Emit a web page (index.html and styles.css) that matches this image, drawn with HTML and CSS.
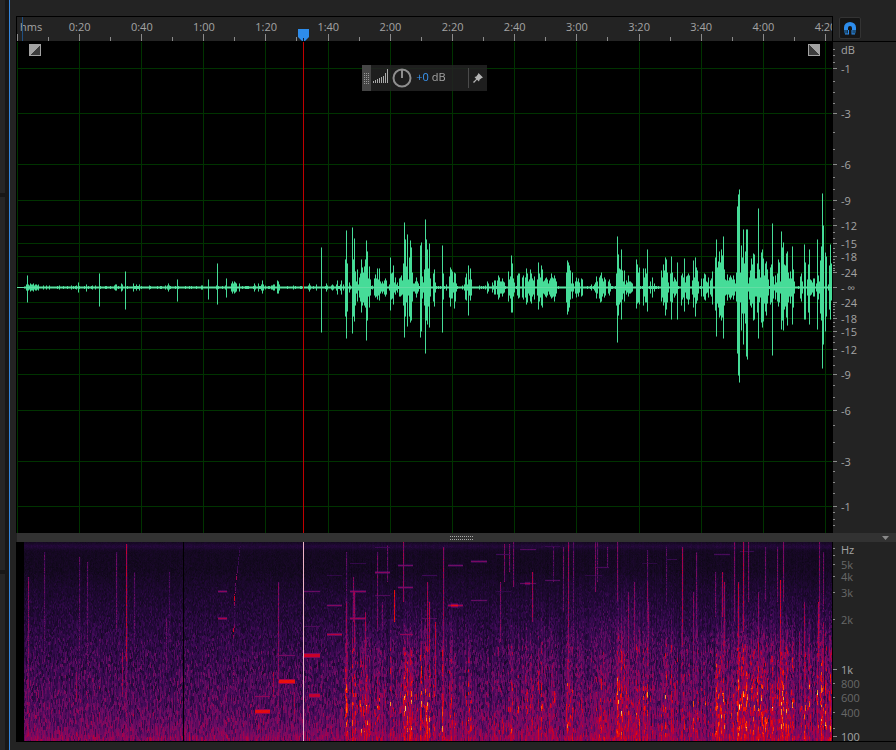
FILE: index.html
```html
<!DOCTYPE html>
<html lang="en">
<head>
<meta charset="utf-8">
<title>Audio editor</title>
<link rel="stylesheet" href="styles.css">
</head>
<body>
<aside class="dock" aria-hidden="true">
  <div class="dock-panel dock-a"></div>
  <div class="dock-panel dock-b"></div>
  <div class="dock-panel dock-c"></div>
</aside>
<main class="editor">
  <section class="timeline">
    <div class="ruler">
      <svg class="ruler-ticks" id="rulerTicks" aria-hidden="true"></svg>
      <div class="ruler-labels">
        <span class="unit">hms</span>
        <span>0:20</span><span>0:40</span><span>1:00</span><span>1:20</span><span>1:40</span><span>2:00</span><span>2:20</span><span>2:40</span><span>3:00</span><span>3:20</span><span>3:40</span><span>4:00</span><span>4:20</span>
      </div>
      <svg class="marker" viewBox="0 0 11 12" aria-hidden="true"><path d="M0 0H11V8L7 12H4L0 8Z" fill="#2d8ceb"/><path d="M5 9h1v3H5z" fill="#111d30"/></svg>
    </div>
    <div class="ruler-tools">
      <button class="snap" aria-label="Toggle snapping">
        <svg viewBox="0 0 12 13" width="12" height="13"><path d="M0 8V5.500A6 5.500 0 0 1 12 5.500V8H8V6Q8 4 6 4T4 6V8Z" fill="#2d8ceb"/><path d="M0 8h3.500v4H1L0 10zM8.500 8H12v2l-1 2H8.500z" fill="#1b507f"/><path d="M1 11.500h4v1H1zM7.500 11.500h3.500v1H7.500zM4 8h1v4H4zM7.500 8h1v4h-1z" fill="#2d8ceb"/></svg>
      </button>
    </div>
  </section>

  <section class="wave-row">
    <div class="wave">
      <canvas id="wave"></canvas>
      <div class="playhead"></div>
      <button class="fade fade-in" aria-label="Fade in"><svg viewBox="0 0 12 12" width="12" height="12" shape-rendering="crispEdges"><path d="M0 0h12v12H0z" fill="#a3a3a3"/><path d="M11 1v10H1z" fill="#3c3c3c"/></svg></button>
      <button class="fade fade-out" aria-label="Fade out"><svg viewBox="0 0 12 12" width="12" height="12" shape-rendering="crispEdges"><path d="M0 0h12v12H0z" fill="#a3a3a3"/><path d="M1 1v10h10z" fill="#3c3c3c"/></svg></button>
      <div class="hud">
        <span class="hud-grip"><svg width="5" height="11" viewBox="0 0 5 11"><path d="M.5 0v11M2.500 0v11M4.500 0v11" stroke="#999" stroke-dasharray="1 1"/></svg></span>
        <svg class="bars" viewBox="0 0 15 14" width="15" height="14" shape-rendering="crispEdges"><path d="M0 12h1v2H0zM2 11h1v3H2zM4 10h1v4H4zM6 9h1v5H6zM8 8h1v6H8zM10 7h1v7h-1zM12 4h1v10h-1zM14 0h1v14h-1z" fill="#aaa"/></svg>
        <button class="knob" aria-label="Gain"><svg viewBox="0 0 20 20" width="20" height="20"><circle cx="10" cy="10" r="8.500" fill="none" stroke="#8f8f8f" stroke-width="2"/><path d="M10 2v8" stroke="#8f8f8f" stroke-width="2"/></svg></button>
        <button class="gain"><b>+0</b> dB</button>
        <span class="hud-sep"></span>
        <button class="pin" aria-label="Pin"><svg viewBox="0 0 10 10" width="10" height="10"><path d="M5.500 0 10 4.500 8.800 5 6.500 6.700 6 8.500 4 6.800 1 10 0 9 3.200 6 1.500 4 3.300 3.500 5 1.200z" fill="#b5b5b5"/></svg></button>
      </div>
    </div>
    <svg class="scale" id="dbScale" role="img" aria-label="Amplitude scale"></svg>
  </section>

  <div class="splitter">
    <svg class="grip" width="24" height="4" viewBox="0 0 24 4"><path d="M0 .5h24M0 3.500h24" stroke="#aaa" stroke-dasharray="1 1"/></svg>
    <button class="collapse" aria-label="Collapse"><svg width="7" height="4" viewBox="0 0 7 4"><path d="M0 0h7L3.500 4z" fill="#8a8a8a"/></svg></button>
  </div>

  <section class="spectrum-row">
    <div class="spectrum">
      <canvas id="spectrum"></canvas>
      <div class="playhead"></div>
    </div>
    <svg class="scale" id="hzScale" role="img" aria-label="Frequency scale"></svg>
  </section>
</main>
<script src="main.js"></script>
</body>
</html>
```
FILE: styles.css
```css
* { box-sizing: border-box; }

:root {
  --panel: #232323;
  --line: #000;
  --text: #a3a3a3;
  --accent: #2d8ceb;
  --scale-width: 63px;
}

body {
  margin: 0;
  height: 100vh;
  display: flex;
  overflow: hidden;
  background: var(--panel);
  color: var(--text);
  font: 11px/16px "Open Sans", "Noto Sans", sans-serif;
}

button {
  padding: 0;
  border: 0;
  background: none;
  color: inherit;
  font: inherit;
  display: flex;
  align-items: center;
  justify-content: center;
}

.dock {
  flex: none;
  width: 9px;
  padding-right: 4px;
  background: #181818;
  display: flex;
  flex-direction: column;
  gap: 4px;
}
.dock-panel { background: #262626; }
.dock-a { flex: 193; }
.dock-b { flex: 373; }
.dock-c { flex: 176; }

.editor {
  flex: 1;
  min-width: 0;
  display: flex;
  flex-direction: column;
  border-left: 1px solid #3486dd;
  padding: 16px 0 8px 6px;
}

.timeline, .wave-row, .spectrum-row {
  display: grid;
  grid-template-columns: minmax(0, 1fr) var(--scale-width);
  border-left: 1px solid var(--line);
}

.timeline {
  height: 26px;
  border-bottom: 1px solid var(--line);
}
.ruler {
  position: relative;
  border-top: 1px solid var(--line);
  border-right: 1px solid var(--line);
}
.ruler-ticks { position: absolute; width: 100%; height: 100%; }
.ruler-labels {
  display: flex;
  padding-top: 2px;
  height: 24px;
  overflow: hidden;
}
.ruler-labels span {
  flex: none;
  width: calc(100% / 13.11);
  padding-left: 1px;
  text-align: center;
}
.ruler-labels .unit {
  width: calc(50% / 13.11);
  padding-left: 3px;
  text-align: left;
}
.marker {
  position: absolute;
  left: calc(35.1% - 5px);
  bottom: 0;
  width: 11px;
  height: 12px;
}
.ruler-tools { padding-left: 6px; }
.snap {
  width: 22px;
  height: 22px;
  margin-top: 1px;
  border: 1px solid #333;
  border-radius: 2px;
  background: #151515;
}

.wave-row { flex: 491; min-height: 0; }
.spectrum-row {
  flex: 199;
  min-height: 0;
  border-bottom: 1px solid var(--line);
}
.wave, .spectrum {
  position: relative;
  min-height: 0;
  min-width: 0;
  overflow: hidden;
  background: #000;
}
canvas {
  display: block;
  position: absolute;
  width: 100%;
  height: 100%;
}
.playhead {
  position: absolute;
  left: 35.1%;
  top: 0;
  bottom: 0;
  width: 1px;
  background: #c00000;
}
.spectrum .playhead { background: #eeb4c6; }

.fade { position: absolute; top: 2px; }
.fade-in { left: 12px; }
.fade-out { right: 13px; }

.hud {
  position: absolute;
  left: 42.3%;
  top: 23px;
  width: 125px;
  height: 26px;
  display: flex;
  align-items: center;
  background: rgba(35, 35, 35, .85);
}
.hud-grip {
  width: 9px;
  height: 100%;
  display: flex;
  align-items: center;
  justify-content: center;
  background: #454545;
}
.bars { margin: 0 4px 4px 2px; }
.gain { margin: 0 0 2px 4px; gap: 3px; }
.gain b { color: #3a97f5; font-weight: 500; }
.hud-sep {
  width: 1px;
  height: 20px;
  margin-left: auto;
  background: #4a4a4a;
}
.pin { width: 18px; height: 100%; }

.scale { width: 100%; height: 100%; }
.scale text { fill: var(--text); }
.scale .dim { fill: #686868; }
.scale .tick, .ruler-ticks .tick { fill: #8a8a8a; }
.ruler-ticks .range { fill: #1f4f82; }

.splitter {
  flex: none;
  position: relative;
  height: 9px;
  background: #323232;
  display: flex;
  align-items: center;
  justify-content: center;
  margin-left: 1px;
  padding-left: 10px;
}
.collapse { position: absolute; right: 7px; top: 3px; }
```
FILE: main.js
```js
const UNITS = 816;
const STEP = 62.2;

// Peaks as "column:above:below"; one value means a symmetric peak.
const PEAKS = parsePeaks(`
26:3 27:12:15 28:3 29:2 30:4 31:3 32:3 33:4 34:2 35:3 36:3 37:2 38:3 43:2 46:2 49:2 59:2 71:2 76:2 78:5:5 86:3:4 92:2 95:2 99:14:19 114:2 115:3 116:3 121:4 122:3 125:16:22
133:4 136:3 139:3 149:2 165:2 167:2 168:4 169:2 177:8:14 201:2 202:2 208:8:12 216:2 217:24:17 225:2 226:9:10 231:4 232:6 233:4 234:6 235:5 236:4 239:4 254:4
255:2 258:4 261:3 262:7:6 263:3 265:2 271:2 272:2 273:3 274:3 277:7:6 278:6 279:3 293:2 308:2 309:4 310:2 316:3 321:40:45 326:4 327:2 331:2 332:3 333:2 336:3 337:7 340:3 341:7 343:3
345:28:29 346:57:51 347:24:24 349:5 350:2 352:60:46 353:28:29 354:49:34 355:16:18 356:6 357:18:14 358:3 359:10 360:14 361:28:25 362:20:18 363:15 364:21:18 365:28:20 366:47:53 367:36:33 368:9 369:21:20 370:8
372:2 374:9:8 375:13:10 376:9 377:19:12 378:8 379:19:13 380:6 381:4 382:6 383:4 384:7 385:9 386:7 389:3 390:30:23 391:14:12 392:15:11 393:22:17 394:5 395:10:7 396:3 397:5 399:9 400:10:9 401:12:8 402:7
403:24:18 404:65:50 405:48:29 406:21:15 407:53:39 408:8 409:30:29 410:47:35 411:40:33 412:15:14 413:4 414:4 415:6 416:10 417:6 418:4 420:42:50 421:45:44 422:11 423:5 424:18 425:68:66 426:48:33 427:38:37 428:19 429:44:40 430:9
433:14 434:18:19 435:5 442:42:45 443:14:12 446:3 449:11:10 450:20:19 451:18:11 452:16:11 453:5 454:15:21 455:14 456:4 462:2 464:3 465:10:12 466:14:13 467:3 468:22:28 469:8 470:19:13 471:8
479:2 485:2 487:6 488:4 492:5 493:2 494:7 495:7 497:7 498:12 499:10 500:6 501:6 502:9 503:6 504:5 508:16:14 509:8 510:11 511:32:25 512:24:25 513:9 514:5 517:12:8 518:14:11 519:14:10 522:10 523:12
525:10 526:19:17 527:14:15 528:6 529:8 530:18:14 531:14:16 532:9 533:7 534:11:12 537:8 538:25:22 539:14 540:10 541:22:18 542:18:20 543:6 544:7 545:9 546:10 547:8 548:4 549:7 550:9 551:14:11 552:10 553:9 554:12:14 555:9 556:6
566:15 567:27 568:25:24 569:22:20 570:17:12 571:4 572:15:11 573:4 575:6 576:10 577:6 578:9 579:5 581:9 582:8 591:3 594:3 595:5 596:11 597:6 599:10:11 600:12:15 601:15:14 602:9 603:6 604:10 605:8 608:6 609:8 610:4
616:14:18 617:51:55 618:33:28 619:19:17 620:18:15 621:38:32 622:17:12 623:6 624:17:14 625:3 626:7 627:5 628:12:9 629:6 630:6 631:5 632:4 636:28:21 637:23:16 638:15 639:20:17 643:19:18 644:10:9 645:19:15 646:14:15 647:38:24 650:6 652:10 654:4
661:17:14 662:10 663:23:18 664:17:15 665:30:28 666:28:22 667:15 668:5 670:14 671:31:32 672:15 673:6 674:10 675:8 676:6 677:25:32 681:12:18 682:14:12 683:10 684:29:24 685:5 686:11 687:12 688:14:17 689:12 692:7 693:27:20 694:10 695:30:29 696:20:16 697:17:13 698:6
701:9 703:9 704:14:12 705:13 706:6 707:5 708:10 710:7 711:9 712:16:17 715:30:23 716:48:49 717:20:16 718:26:20 719:36:30 720:25:28 721:38:33 722:32:30 723:51 724:18 725:8 726:7 727:13 728:7 729:10 730:12 731:10 732:8 733:12 734:8 735:4
736:15:14 737:81:66 738:93:88 739:98:95 740:15 741:42:43 742:30:26 743:58:57 744:24:26 745:36 746:58:69 747:58:72 748:4 749:10:12 750:17:18 751:29:20 752:23:16 753:34:33 754:33:32 755:9 756:9 757:24:25 758:79:51 759:18:15 760:10
761:35 762:38:40 763:29:34 764:12:16 765:24 766:26:28 767:18:16 768:8 770:20:17 771:23:15 772:64:68 773:11 774:3 775:12 776:5 777:14 778:28:19 779:25:15 780:6 781:56:42 782:40:33 783:45:43 784:23:22 785:22:19 786:34:30 787:36:38 788:15 789:9 790:16 791:9 792:41:37 793:18:20 794:6
800:11 801:14 802:6 804:43:32 805:25:32 807:8 808:23:25 809:38:37 810:8 811:7 812:5 813:9 814:9 816:4 817:48:42 818:12 819:6 820:27:26 821:41:33 822:94:81 823:62:57 825:35:44 826:31:29 828:3 829:22 830:43:32 831:24:13`);

// Sustained tones: [start, end, row, level]
const TONES = [
  [201,210,49,.45],[201,210,76,.52],[262,278,113,.42],[262,278,139,.66],[238,253,154,.47],[238,253,169,.64],
  [287,303,49,.38],[287,303,113,.58],[292,303,153,.56],[287,303,84,.33],[310,325,63,.44],[310,325,92,.54],[310,325,33,.26],
  [333,349,21,.26],[333,349,49,.46],[333,349,76,.5],[358,373,5,.3],[358,373,30,.45],[358,373,53,.33],
  [381,396,23,.4],[381,396,45,.43],[383,396,92,.48],[405,420,33,.3],[405,420,76,.35],[431,446,23,.4],[431,446,63,.5],[434,441,63,.64],
  [454,470,19,.42],[454,470,58,.38],[479,494,12,.3],[479,494,49,.26],[503,519,7,.34],[503,519,41,.36],[508,513,41,.5],[528,543,4,.28],[528,543,38,.34],
  [568,585,33,.26],[578,592,25,.32],[625,640,21,.24],[650,660,17,.27],[697,713,12,.32],[723,737,9,.28]
];

// Vertical transients: [column, top, bottom, level]
const HITS = [
  [11,35,199,.43],[27,10,120,.35],[62,15,190,.35],[70,20,199,.35],[99,10,90,.38],[109,2,120,.55],[109,120,199,.43],[117,30,110,.35],[105,110,155,.5],
  [59,130,160,.5],[149,75,130,.38],[152,30,100,.3],[261,40,199,.45],[256,130,155,.5],[277,150,180,.5],[329,10,90,.34],[377,48,80,.64],[386,0,60,.48],
  [360,10,90,.4],[370,3,40,.37],[426,5,199,.48],[487,2,40,.42],[492,2,30,.4],[496,0,45,.4],[515,30,80,.5],[551,0,150,.48],[556,0,100,.36],
  [578,0,50,.42],[580,0,40,.38],[600,0,60,.43],[630,40,80,.44],[665,5,105,.52],[679,10,100,.4],[705,30,75,.52],[717,0,80,.42],[726,0,90,.53],[731,0,60,.42],
  [748,5,60,.4],[766,0,60,.44],[802,0,150,.43],[815,0,100,.43],[546,5,70,.38],[536,5,40,.33],[336,35,80,.45],[365,60,85,.4],
  [630,8,60,.36],[760,5,60,.4],[590,5,25,.36],[649,5,60,.34],[698,30,75,.4],[329,60,140,.5],[337,50,110,.5],[348,70,120,.5],[410,40,110,.5],
  [412,60,110,.55],[418,80,150,.55],[483,40,100,.42],[611,50,150,.45],[617,40,110,.45],[631,60,140,.44],[676,50,150,.45],[707,40,110,.5],[721,40,130,.55],
  [763,38,199,.57],[787,60,130,.5],[782,90,150,.48],[741,50,100,.45],[801,60,120,.55],[806,80,150,.5],[806,10,70,.4]
];

const PALETTE = [
  [0,[6,3,12]],[.1,[18,8,29]],[.2,[32,8,53]],[.3,[61,10,85]],[.4,[112,12,100]],
  [.5,[158,2,81]],[.6,[212,0,30]],[.7,[246,24,0]],[.8,[255,99,8]],[.9,[255,181,55]],[1,[255,246,176]]
];

const HZ_MARKS = [
  [6,'Hz'],[13,''],[22,'5k',1],[34,'4k',1],[50,'3k',1],[77,'2k',1],[127,'1k'],
  [141,'800',1],[155,'600',1],[170,'400',1],[186,''],[194,'100']
];

function parsePeaks(source) {
  const peaks = new Map();
  for (const entry of source.trim().split(/\s+/)) {
    const [x, up, down] = entry.split(':').map(Number);
    peaks.set(x - 17, [up, down || up]);
  }
  return peaks;
}

function random(seed) {
  let state = seed;
  return () => {
    state = (state + 0x6d2b79f5) | 0;
    let t = Math.imul(state ^ (state >>> 15), 1 | state);
    t = (t + Math.imul(t ^ (t >>> 7), 61 | t)) ^ t;
    return ((t ^ (t >>> 14)) >>> 0) / 4294967296;
  };
}

function fit(canvas) {
  canvas.width = canvas.clientWidth;
  canvas.height = canvas.clientHeight;
  return canvas.getContext('2d');
}

const level = db => Math.pow(10, db / 20);
const SPAN = 245.3;

function drawRuler() {
  const svg = document.getElementById('rulerTicks');
  const k = svg.clientWidth / (UNITS - 1);
  let out = `<rect class="range" x="5" y="0" width="1" height="24"/>`;
  for (let i = 0; i * STEP / 2 < UNITS; i++) {
    const h = i % 2 ? 4 : 7;
    out += `<rect class="tick" x="${Math.floor(i * STEP / 2 * k)}" y="${24 - h}" width="1" height="${h}"/>`;
  }
  svg.innerHTML = out;
}

function drawWave() {
  const canvas = document.getElementById('wave');
  const ctx = fit(canvas);
  const { width: w, height: h } = canvas;
  const kx = w / UNITS;
  const ky = h / 491;
  const mid = Math.round(h / 2) - 1;
  ctx.fillStyle = '#003300';
  for (let i = 0; i * STEP < UNITS; i++) ctx.fillRect(Math.floor(i * STEP * kx), 0, 1, h);
  for (const db of [-1, -3, -6, -9, -12, -15, -18, -24]) {
    const d = Math.round(level(db) * SPAN * ky);
    ctx.fillRect(0, mid - d, w - 1, 1);
    ctx.fillRect(0, mid + d, w - 1, 1);
  }
  const rnd = random(4);
  for (let x = 0; x < UNITS - 1; x++) {
    const [up, down] = PEAKS.get(x) || (x > 6 ? [1, 1] : [0, 0]);
    const solid = up > 1 || rnd() < .3;
    const px = Math.round(x * kx);
    const pw = Math.max(1, Math.ceil(kx - .01));
    ctx.fillStyle = '#25794f';
    ctx.fillRect(px, mid - Math.round(up * ky), pw, Math.round((up + down) * ky) + 1);
    ctx.fillStyle = '#46dc98';
    if (solid) {
      const trim = up > 1 ? 1 : 0;
      ctx.fillRect(px, mid - Math.round(up * ky) + trim, pw, Math.round((up + down) * ky) + 1 - 2 * trim);
    }
  }
  ctx.fillStyle = '#62dea4';
  ctx.fillRect(0, mid, w - 1, 1);
}

function drawDbScale() {
  const svg = document.getElementById('dbScale');
  const h = svg.clientHeight;
  const mid = Math.round(h / 2) - 1;
  const labelled = [1, 3, 6, 9, 12, 15, 18, 24];
  const minor = [.25, .5, .75, 1.5, 2, 2.5, 4, 5, 7, 8, 10, 11, 13, 14, 16, 17, 19, 20, 21, 22, 23];
  let out = `<text x="8" y="12">dB</text><text x="8" y="${mid + 5}">- ∞</text><rect class="tick" x="0" y="${mid}" width="4" height="1"/>`;
  for (const sign of [-1, 1]) {
    for (const db of minor.concat(labelled)) {
      const y = mid + sign * Math.round(level(-db) * SPAN * h / 491);
      const major = labelled.includes(db);
      out += `<rect class="tick" x="0" y="${y}" width="${major ? 4 : 2}" height="1"/>`;
      if (major) out += `<text x="8" y="${y + 5}">-${db}</text>`;
    }
  }
  svg.innerHTML = out;
}

function drawHzScale() {
  const svg = document.getElementById('hzScale');
  const k = svg.clientHeight / 199;
  let out = '';
  for (const [row, label, dim] of HZ_MARKS) {
    const y = Math.round(row * k);
    const wide = label === '1k' || label === '100';
    out += `<rect class="tick" x="0" y="${y}" width="${wide ? 4 : 2}" height="1"/>`;
    if (label) out += `<text x="8" y="${y + (label === 'Hz' ? 6 : 5)}"${dim ? ' class="dim"' : ''}>${label}</text>`;
  }
  svg.innerHTML = out;
}

function colour(v) {
  v = Math.max(0, Math.min(1, v));
  const i = Math.min(9, Math.floor(v * 10));
  const f = v * 10 - i;
  const a = PALETTE[i][1];
  const b = PALETTE[i + 1][1];
  return a.map((c, n) => c + (b[n] - c) * f);
}

function bump(value, centre, width) {
  const d = (value - centre) / width;
  return Math.exp(-d * d);
}

function buildSpectrum() {
  const rnd = random(11);
  const W = UNITS;
  const H = 199;
  const v = new Float32Array(W * H);
  for (let x = 7; x < W - 1; x++) {
    const [up, down] = PEAKS.get(x) || [1, 1];
    const amp = (up + down) / 2;
    const loud = x > 326 ? Math.min(1, amp / 38) : Math.min(.12, amp / 90);
    const lift = (rnd() - .5) * (x > 326 ? .07 : .03);
    const reach = .25 + rnd() * .35;
    let cell = 0;
    let left = 0;
    let spark = 0;
    let sparkLeft = 0;
    for (let y = 0; y < H; y++) {
      const t = y / H;
      if (left-- <= 0) {
        cell = rnd() + rnd() - 1;
        left = Math.floor(t * 3.2 + rnd());
      }
      if (sparkLeft-- <= 0) {
        spark = rnd();
        sparkLeft = 2 + Math.floor(rnd() * 4);
      }
      let s = .115 + .235 * Math.pow(Math.max(0, (t - .15) / .85), .7);
      s += .09 * bump(y, 4, 3) + lift * (.4 + t);
      s += cell * (.03 + .11 * Math.min(1, t * 1.6));
      s += .04 * Math.min(1, Math.max(0, (t - .8) / .15)) + .05 * bump(y, 196, 4);
      const haze = bump(x, 600, 38) + bump(x, 735, 60) * .5 + bump(x, 400, 50) * .2;
      s += haze * .06 * Math.min(1, t * 2.5);
      if (t > reach * .7) s += loud * .1 * Math.min(1, (t - reach * .7) * 4);
      const body = bump(y, 160, 23) + .55 * bump(y, 115, 26) + .5 * bump(y, 186, 7);
      s += Math.pow(loud, .5) * body * (.01 + .48 * spark * spark * spark);
      v[y * W + x] = s;
    }
  }
  for (const [x, top, bottom, power] of HITS) {
    for (let y = top; y < bottom; y++) {
      const i = y * W + x;
      v[i] = Math.max(v[i], power + (rnd() - .6) * .16);
      v[i + 1] = Math.max(v[i + 1], v[i + 1] * .75 + power * .18);
    }
  }
  for (const [start, end, y, power] of TONES) {
    const core = y > 100 && power > .5 ? 1 : 0;
    for (let x = start; x < end; x++) {
      for (let d = -2; d <= 2; d++) {
        const out = Math.max(0, Math.abs(d) - core);
        const i = (y + d) * W + x;
        v[i] = Math.max(v[i], power - out * .16 + (rnd() - .5) * .03);
      }
    }
  }
  // Rising chirp
  for (let y = 4; y < 155; y++) {
    const x = y < 60 ? Math.round(223 - y * .11) : 217 - (y > 85 ? 1 : 0);
    const power = .28 + .35 * bump(y, 56, 7) + .35 * bump(y, 89, 6) + .22 * bump(y, 36, 6) + .18 * bump(y, 135, 12);
    if (rnd() < .72) v[y * W + x] = Math.max(v[y * W + x], power);
  }
  const data = new ImageData(W, H);
  for (let i = 0; i < W * H; i++) {
    const x = i % W;
    const c = x < 7 || x === 166 || x === W - 1 ? [0, 0, 0] : colour(v[i]);
    data.data.set([c[0], c[1], c[2], 255], i * 4);
  }
  const buffer = document.createElement('canvas');
  buffer.width = W;
  buffer.height = H;
  buffer.getContext('2d').putImageData(data, 0, 0);
  return buffer;
}

const spectrumImage = buildSpectrum();

function drawSpectrum() {
  const canvas = document.getElementById('spectrum');
  const ctx = fit(canvas);
  ctx.imageSmoothingEnabled = false;
  ctx.drawImage(spectrumImage, 0, 0, canvas.width, canvas.height);
}

function draw() {
  drawRuler();
  drawWave();
  drawDbScale();
  drawSpectrum();
  drawHzScale();
}

window.addEventListener('resize', draw);
draw();
```
